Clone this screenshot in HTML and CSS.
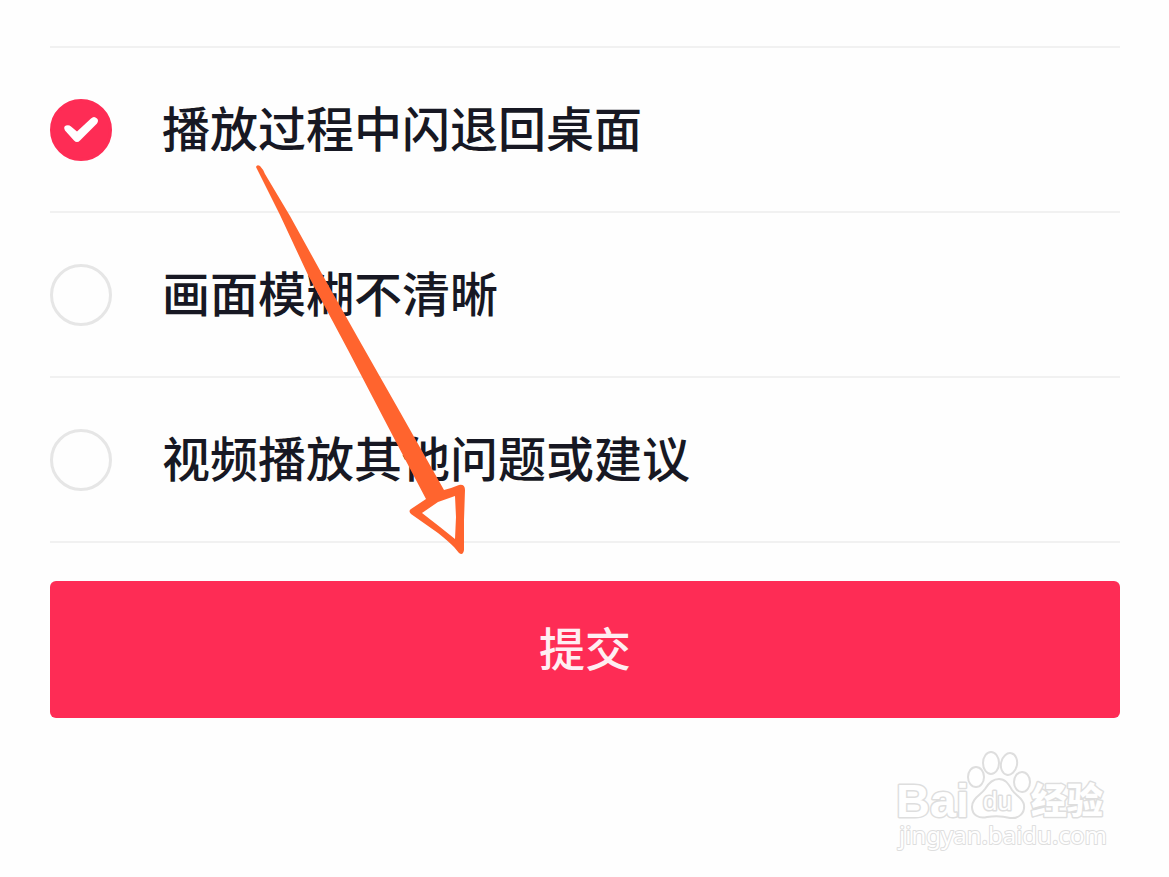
FILE: index.html
```html
<!DOCTYPE html>
<html lang="zh-CN">
<head>
<meta charset="utf-8">
<meta name="viewport" content="width=device-width, initial-scale=1">
<title>视频播放问题反馈</title>
<link rel="stylesheet" href="styles.css">
</head>
<body>
<form class="feedback">
  <div class="options">
    <label class="option"><input class="radio" type="radio" name="issue" checked><span class="option-text">播放过程中闪退回桌面</span></label>
    <label class="option"><input class="radio" type="radio" name="issue"><span class="option-text">画面模糊不清晰</span></label>
    <label class="option"><input class="radio" type="radio" name="issue"><span class="option-text">视频播放其他问题或建议</span></label>
  </div>
  <button class="submit" type="button">提交</button>
</form>
<svg class="arrow" width="220" height="400" viewBox="250 160 220 400" aria-hidden="true">
  <path fill="#ff642e" fill-rule="evenodd" d="M256 167Q257 164 260 166Q263 169 265 174L290 216L322 274L358 338L400 412L444 490Q452 488 459 485Q465 484 465 490L464 520L464 550Q463 556 459 553L454 547Q448 541 438 533L411 514Q408 511 411 509L426 499L396 442L348 350L308 275L280 215Z M422 513L440 527L455 539L456 517L455 496L438 502Z"/>
</svg>
<svg class="watermark" width="220" height="110" viewBox="890 745 220 110" role="img" aria-label="Baidu 经验">
  <g class="outline">
    <text class="brand" x="896" y="817">Bai</text>
    <ellipse cx="976" cy="777" rx="8" ry="10"/>
    <ellipse cx="991" cy="763" rx="8" ry="11"/>
    <ellipse cx="1009" cy="764" rx="8" ry="11" transform="rotate(12 1009 764)"/>
    <ellipse cx="1022" cy="782" rx="8" ry="10"/>
    <path d="M999 779C992 779 988 784 985 789C981 795 972 798 972 807C972 815 979 819 987 817Q999 815 1010 818C1019 819 1025 813 1024 805C1023 798 1016 796 1012 790C1008 783 1005 779 999 779Z"/>
    <text class="du" x="983" y="810">du</text>
    <text class="cjk" x="1031" y="814">经验</text>
    <text class="site" x="899" y="844">jingyan.baidu.com</text>
  </g>
</svg>
</body>
</html>
```
FILE: styles.css
```css
* { box-sizing: border-box; }

body {
  position: relative;
  min-height: 100vh;
  margin: 0;
  background: #fefefe;
  color: #171823;
  font-family: "Noto Sans CJK SC", sans-serif;
}

.feedback {
  display: flex;
  flex-direction: column;
  gap: 38px;
  padding: 46px 49px 0 50px;
}

.options { border-top: 2px solid #f1f1f1; }

.option {
  display: flex;
  align-items: center;
  gap: 50px;
  min-height: 165px;
  border-bottom: 2px solid #f1f1f1;
  font-size: 48px;
  font-weight: 500;
  line-height: 72px;
}

.option-text { padding-bottom: 8px; }

.radio {
  appearance: none;
  flex: none;
  width: 62px;
  height: 62px;
  margin: 0;
  border: 3px solid #e6e6e6;
  border-radius: 50%;
  display: grid;
  place-items: center;
}

.radio:checked {
  border-color: #fe2c55;
  background: #fe2c55;
}

.radio:checked::before {
  content: "";
  width: 34px;
  height: 26px;
  background: #fff;
  clip-path: path("M1 14Q-1 10 2 9Q5 8 7 10L13 15L27 2Q30 -1 33 2Q35 4 33 7L16 24Q13 27 10 24Z");
}

.submit {
  height: 137px;
  padding: 0 0 8px;
  border: 0;
  border-radius: 6px;
  background: #fe2c55;
  color: #ffeef2;
  font: 500 46px/68px "Noto Sans CJK SC", sans-serif;
}

.arrow {
  position: absolute;
  left: 250px;
  top: 160px;
  pointer-events: none;
}

.watermark {
  position: absolute;
  right: 59px;
  top: 745px;
}

.outline {
  fill: #fff;
  stroke: #dedede;
  stroke-width: 2px;
  stroke-linejoin: round;
}

.outline text {
  paint-order: stroke;
  stroke-width: 3px;
}

.brand { font: 700 47px "Liberation Sans", sans-serif; }
.outline .du { font: 400 26px "Liberation Sans", sans-serif; }
.cjk { font: 900 36px "Noto Sans CJK SC", sans-serif; }
.outline .site { font: 400 24px "Noto Sans", sans-serif; stroke-width: 2px; }
```
